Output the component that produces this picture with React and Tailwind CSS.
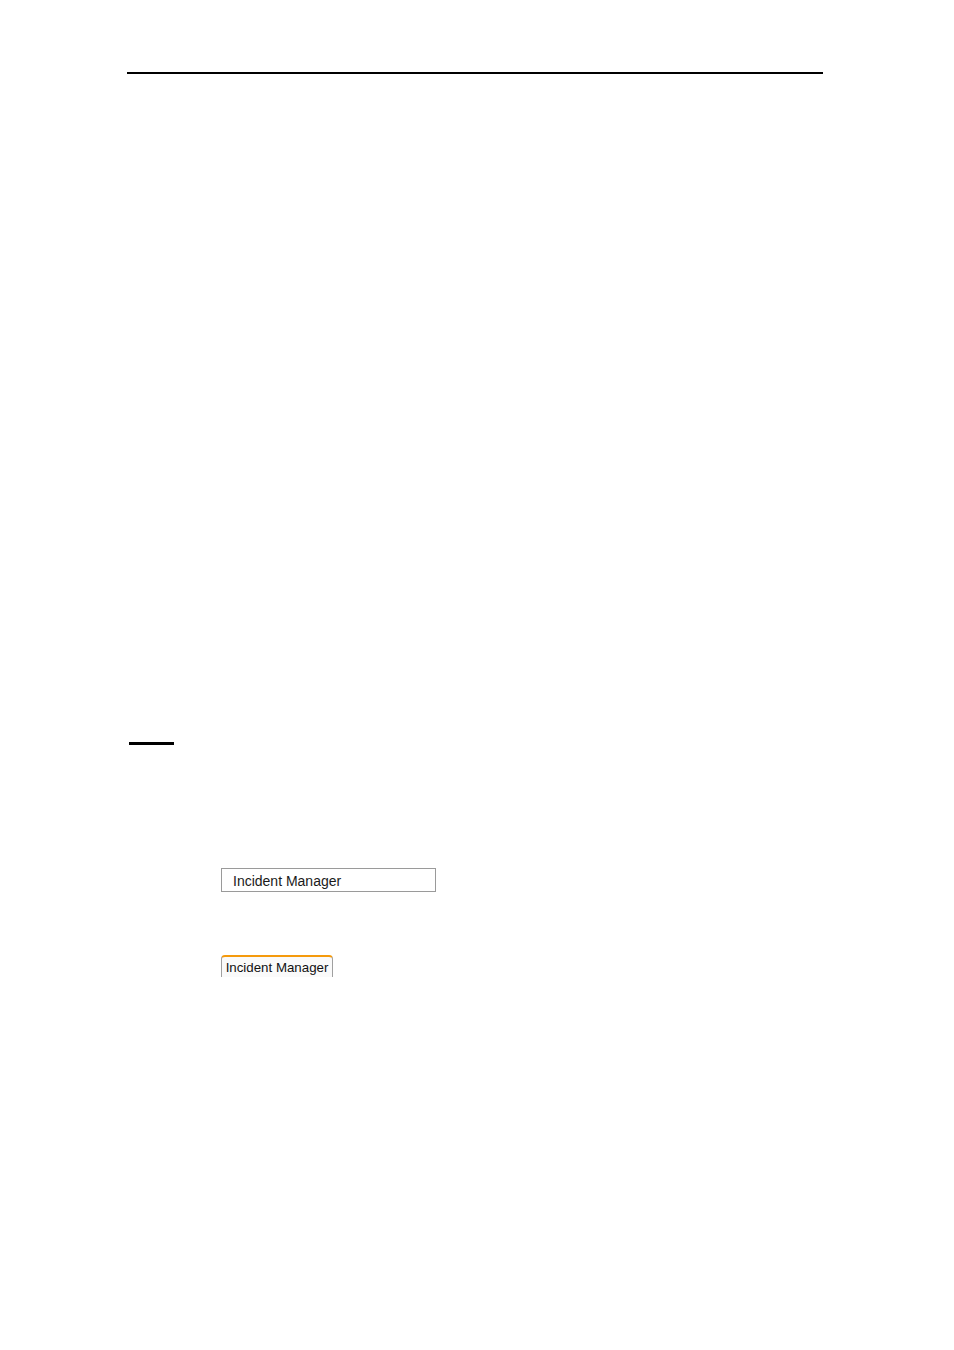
export default function App() {
  return (
    <div className="w-[954px] h-[1350px] bg-white relative" style={{ fontFamily: '"DejaVu Sans", "Liberation Sans", sans-serif' }}>
      <div className="pt-[72px] pl-[127px]">
        <div className="w-[696px] h-[2px] bg-black" />
      </div>
      <div className="pt-[668px] pl-[129px]">
        <div className="w-[45px] h-[3px] bg-black" />
      </div>
      <div className="pt-[123px] pl-[221px]">
        <div className="w-[215px] h-[24px] border border-[#9a9a9a] flex items-center pl-[11px] pt-[2px] text-[14px] text-[#1a1a1a] leading-none" style={{ fontFamily: '"Liberation Sans", Arial, sans-serif' }}>
          Incident Manager
        </div>
      </div>
      <div className="pt-[63px] pl-[221px]">
        <div className="w-[112px] h-[22px] border-t-[2px] border-t-[#f59a0c] border-x border-x-[#a0a0a0] rounded-t-[4px] bg-[#fafafa] flex items-center justify-center text-[13.3px] text-[#111] leading-none pt-[2px]" style={{ fontFamily: '"Liberation Sans", Arial, sans-serif' }}>
          Incident Manager
        </div>
      </div>
    </div>
  );
}
